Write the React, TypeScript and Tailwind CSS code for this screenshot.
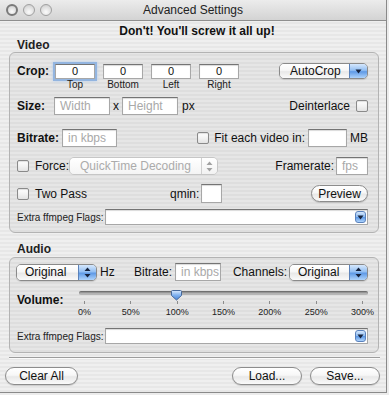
import React from 'react';

const stripes =
  'bg-[repeating-linear-gradient(180deg,#efefef_0px,#efefef_2px,#e7e7e7_2px,#e7e7e7_4px)]';
const gloss =
  'bg-[linear-gradient(180deg,#ffffff_0%,#f7f7f7_45%,#e8e8e8_55%,#fafafa_100%)]';
const blue =
  'bg-[linear-gradient(180deg,#d6e8fd_0%,#93bff2_45%,#5f9ae6_55%,#aed3fb_100%)]';

function Field({
  className = '',
  placeholder,
  value,
  focused,
  children,
}: {
  className?: string;
  placeholder?: string;
  value?: string;
  focused?: boolean;
  children?: React.ReactNode;
}) {
  return (
    <div
      className={`flex items-center bg-white border border-[#a7a7a7] border-t-[#747474] ${
        focused
          ? 'shadow-[0_0_0_2px_#93b5e0,0_0_3px_2px_#b3cdee]'
          : 'shadow-[inset_0_1px_1px_rgba(0,0,0,0.15)]'
      } ${className}`}
    >
      {placeholder && (
        <span className="pl-[5px] text-[12px] leading-none text-[#a9a9a9]">{placeholder}</span>
      )}
      {value && <span className="w-full text-center text-[11px] leading-none">{value}</span>}
      {children}
    </div>
  );
}

function Check() {
  return (
    <div className="w-[12px] h-[12px] shrink-0 rounded-[2px] border border-[#8a8a8a] bg-[linear-gradient(180deg,#ffffff_0%,#f3f3f3_50%,#e3e3e3_100%)] shadow-[inset_0_1px_1px_rgba(0,0,0,0.12)]" />
  );
}

function UpDown({ color }: { color: string }) {
  return (
    <svg width="7" height="11" viewBox="0 0 7 11">
      <path d="M3.5 0.5 L6.5 4 H0.5 Z M0.5 7 H6.5 L3.5 10.5 Z" fill={color} />
    </svg>
  );
}

function Down({ color }: { color: string }) {
  return (
    <svg width="7" height="5" viewBox="0 0 7 5">
      <path d="M0.5 0.5 H6.5 L3.5 4.5 Z" fill={color} />
    </svg>
  );
}

function Popup({
  label,
  className = '',
  updown,
  disabled,
  pad = 'pl-[8px]',
}: {
  label: string;
  className?: string;
  updown?: boolean;
  disabled?: boolean;
  pad?: string;
}) {
  return (
    <div
      className={`flex shrink-0 rounded-[5px] border overflow-hidden ${
        disabled ? 'border-[#c6c6c6]' : 'border-[#8a8a8a] shadow-[0_1px_1px_rgba(0,0,0,0.12)]'
      } ${className}`}
    >
      <div
        className={`flex-1 flex items-center ${pad} text-[12px] leading-none ${
          disabled ? 'text-[#ababab] bg-[linear-gradient(180deg,#ffffff_0%,#f4f4f4_100%)]' : `text-[#111] ${gloss}`
        }`}
      >
        {label}
      </div>
      {disabled ? (
        <div className="w-[16px] flex items-center justify-center border-l border-[#d0d0d0] bg-[linear-gradient(180deg,#ffffff_0%,#f2f2f2_100%)]">
          <UpDown color="#a2a2a2" />
        </div>
      ) : (
        <div className={`w-[18px] flex items-center justify-center border-l border-[#5b82ba] ${blue}`}>
          {updown ? <UpDown color="#16233d" /> : <Down color="#16233d" />}
        </div>
      )}
    </div>
  );
}

function ComboArrow() {
  return (
    <div className={`ml-auto mr-[1px] w-[11px] h-[12px] rounded-[3px] border border-[#5a82bd] flex items-center justify-center ${blue}`}>
      <Down color="#16233d" />
    </div>
  );
}

function Button({ children, className = '' }: { children: React.ReactNode; className?: string }) {
  return (
    <div
      className={`flex items-center justify-center rounded-full border border-[#8c8c8c] shadow-[0_1px_1px_rgba(0,0,0,0.15)] ${gloss} text-[12px] leading-none text-[#111] ${className}`}
    >
      {children}
    </div>
  );
}

const ticks = ['0%', '50%', '100%', '150%', '200%', '250%', '300%'];

function Slider() {
  return (
    <div className="relative w-[289px] h-[30px]">
      <div className="mt-[2px] h-[4px] rounded-full border-t border-[#6f6f6f] bg-[#b6b6b6] shadow-[inset_0_1px_1px_rgba(0,0,0,0.2)]" />
      <div className="mx-[5px] mt-[6px] flex justify-between">
        {ticks.map((t) => (
          <div key={t} className="relative w-px h-[3px] bg-[#8c8c8c]">
            <span className="absolute top-[6px] left-1/2 -translate-x-1/2 text-[9px] leading-[10px] whitespace-nowrap text-[#222]">
              {t}
            </span>
          </div>
        ))}
      </div>
      <svg className="absolute left-[91px] top-[1px]" width="13" height="11" viewBox="0 0 13 11">
        <defs>
          <linearGradient id="th" x1="0" y1="0" x2="0" y2="1">
            <stop offset="0" stopColor="#dcebfd" />
            <stop offset="0.5" stopColor="#7fb0ee" />
            <stop offset="1" stopColor="#4a86d6" />
          </linearGradient>
        </defs>
        <path
          d="M1.5 1.5 Q1.5 0.5 2.5 0.5 H10.5 Q11.5 0.5 11.5 1.5 V5.5 L6.5 10 L1.5 5.5 Z"
          fill="url(#th)"
          stroke="#46689a"
        />
      </svg>
    </div>
  );
}

function Light({ dark }: { dark?: boolean }) {
  return (
    <div
      className={`w-[12px] h-[12px] rounded-full bg-[radial-gradient(circle_at_50%_70%,#fbfbfb_0%,#dedede_60%,#c2c2c2_100%)] ${
        dark ? 'border-2 border-[#7a7a7a]' : 'border border-[#a0a0a0]'
      }`}
    />
  );
}

export default function App() {
  return (
    <div className="w-[389px] h-[395px] bg-[#ececec] overflow-hidden font-['Liberation_Sans',Arial,sans-serif] text-[#111]">
      <div className={`w-[387px] h-[393px] border-r border-b border-[#8a8a8a] flex flex-col ${stripes}`}>
        {/* title bar */}
        <div className="h-[21px] shrink-0 flex items-center border-b border-[#8f8f8f] bg-[linear-gradient(180deg,#ececec_0%,#d3d3d3_100%)]">
          <div className="w-[60px] flex items-center gap-[5px] pl-[6px]">
            <Light dark />
            <Light />
            <Light />
          </div>
          <div className="flex-1 text-center text-[12px] leading-none text-[#222]">Advanced Settings</div>
          <div className="w-[60px]" />
        </div>

        <div className="mt-[3px] pl-[8px] text-center text-[12px] font-bold leading-[14px]">
          Don't! You'll screw it all up!
        </div>
        <div className="ml-[17px] text-[12px] font-bold leading-[14px] text-[#222]">Video</div>

        {/* video box */}
        <div className="ml-[9px] w-[370px] h-[181px] shrink-0 rounded-[6px] border border-[#b3b3b3] bg-[rgba(0,0,0,0.035)] flex flex-col pl-[7px] pr-[10px]">
          <div className="mt-[9px] h-[29px] flex items-start">
            <div className="w-[38px] mt-[1px] text-[12px] font-bold leading-[16px]">Crop:</div>
            <div className="flex gap-[8px]">
              {['Top', 'Bottom', 'Left', 'Right'].map((l, i) => (
                <div key={l} className="w-[40px] flex flex-col items-center">
                  <Field className="mt-[2px] w-full h-[15px]" value="0" focused={i === 0} />
                  <div className="text-[10px] leading-[12px] text-[#222]">{l}</div>
                </div>
              ))}
            </div>
            <Popup label="AutoCrop" className="ml-auto mt-[1px] h-[16px] w-[89px]" pad="pl-[10px]" />
          </div>

          <div className="mt-[6px] h-[18px] flex items-center text-[12px]">
            <div className="w-[37px] font-bold">Size:</div>
            <Field className="w-[56px] h-full" placeholder="Width" />
            <div className="w-[12px] text-center">x</div>
            <Field className="w-[56px] h-full" placeholder="Height" />
            <div className="ml-[4px]">px</div>
            <div className="ml-auto mr-[6px]">Deinterlace</div>
            <Check />
          </div>

          <div className="mt-[14px] h-[18px] flex items-center text-[12px]">
            <div className="w-[45px] font-bold">Bitrate:</div>
            <Field className="w-[55px] h-full" placeholder="in kbps" />
            <div className="ml-auto h-full flex items-center">
              <Check />
              <div className="ml-[5px]">Fit each video in:</div>
              <Field className="ml-[3px] w-[39px] h-full" />
              <div className="ml-[3px]">MB</div>
            </div>
          </div>

          <div className="mt-[10px] h-[18px] flex items-center text-[12px]">
            <Check />
            <div className="ml-[6px]">Force:</div>
            <Popup label="QuickTime Decoding" className="h-full w-[149px]" updown disabled pad="pl-[10px]" />
            <div className="ml-auto">Framerate:</div>
            <Field className="ml-[2px] w-[32px] h-full" placeholder="fps" />
          </div>

          <div className="mt-[9px] h-[19px] flex items-center text-[12px]">
            <div className="w-[153px] flex items-center">
              <Check />
              <div className="ml-[6px]">Two Pass</div>
            </div>
            <div>qmin:</div>
            <Field className="ml-[2px] w-[21px] h-full" />
            <Button className="ml-auto w-[57px] h-[17px]">Preview</Button>
          </div>

          <div className="mt-[6px] h-[16px] flex items-center">
            <div className="w-[88px] text-[10px] text-[#222]">Extra ffmpeg Flags:</div>
            <Field className="flex-1 h-full">
              <ComboArrow />
            </Field>
          </div>
        </div>

        <div className="mt-[9px] ml-[17px] text-[12px] font-bold leading-[14px] text-[#222]">Audio</div>

        {/* audio box */}
        <div className="mt-[1px] ml-[9px] w-[370px] h-[96px] shrink-0 rounded-[6px] border border-[#b3b3b3] bg-[rgba(0,0,0,0.035)] flex flex-col pl-[7px] pr-[10px]">
          <div className="mt-[5px] h-[18px] flex items-center text-[12px]">
            <Popup label="Original" className="-ml-[1px] w-[81px] h-[17px]" updown />
            <div className="ml-[3px] w-[34px]">Hz</div>
            <div>Bitrate:</div>
            <Field className="ml-[3px] w-[46px] h-full" placeholder="in kbps" />
            <div className="ml-auto">Channels:</div>
            <Popup label="Original" className="ml-[2px] w-[79px] h-[17px]" updown />
          </div>

          <div className="mt-[8px] h-[30px] flex items-start">
            <div className="w-[62px] mt-[3px] text-[12px] font-bold leading-[16px]">Volume:</div>
            <Slider />
          </div>

          <div className="mt-[9px] h-[16px] flex items-center">
            <div className="w-[88px] text-[10px] text-[#222]">Extra ffmpeg Flags:</div>
            <Field className="flex-1 h-full">
              <ComboArrow />
            </Field>
          </div>
        </div>

        <div className="mt-[4px] ml-[9px] w-[371px] h-[2px] border-t border-[#9c9c9c] border-b border-b-[#fafafa]" />

        <div className="mt-[8px] ml-[5px] w-[375px] h-[18px] flex">
          <Button className="w-[73px] h-full">Clear All</Button>
          <Button className="ml-auto w-[70px] h-full">Load...</Button>
          <Button className="ml-[8px] w-[70px] h-full">Save...</Button>
        </div>
      </div>
    </div>
  );
}
